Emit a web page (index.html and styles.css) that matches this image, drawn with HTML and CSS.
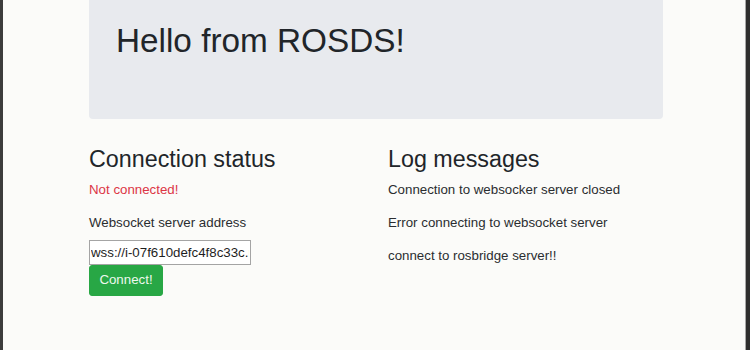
FILE: index.html
```html
<!DOCTYPE html>
<html lang="en">
<head>
<meta charset="utf-8">
<title>ROSDS</title>
<link rel="stylesheet" href="styles.css">
</head>
<body>
<div class="frame">
  <div class="container">
    <div class="jumbotron">
      <h1 class="display">Hello from ROSDS!</h1>
    </div>
    <div class="row">
      <div class="col">
        <h3 class="heading">Connection status</h3>
        <p class="status">Not connected!</p>
        <label class="label" for="ws">Websocket server address</label>
        <input class="address" id="ws" type="text" value="wss://i-07f610defc4f8c33c.robotigniteacademy.com/rosbridge/">
        <button class="btn" type="button">Connect!</button>
      </div>
      <div class="col">
        <h3 class="heading">Log messages</h3>
        <p class="log">Connection to websocker server closed</p>
        <p class="log">Error connecting to websocket server</p>
        <p class="log">connect to rosbridge server!!</p>
      </div>
    </div>
  </div>
</div>
</body>
</html>
```

FILE: styles.css
```css
* { box-sizing: border-box; }

html, body {
  margin: 0;
  padding: 0;
  height: 350px;
  overflow: hidden;
}

body {
  font-family: "Liberation Sans", Arial, sans-serif;
  font-size: 13.3px;
  line-height: 19.8px;
  color: #212529;
  background: #fbfbf9;
}

.frame {
  height: 350px;
  border-left: 3px solid #3c3c3c;
  border-right: 4px solid #2e2e2e;
  box-shadow: inset -1px 0 0 #a8a8a8;
  background: #fbfbf9;
}

.container {
  width: 574px;
  margin-left: 86px;
}

.jumbotron {
  background: #e8eaee;
  border-radius: 0 0 4px 4px;
  padding: 21px 27px 58px;
  margin-bottom: 27px;
}

.display {
  margin: 0;
  font-size: 33.3px;
  line-height: 40px;
  font-weight: 400;
  color: #212529;
}

.row {
  display: grid;
  grid-template-columns: 275px 275px;
  column-gap: 24px;
}

.col {
  display: flex;
  flex-direction: column;
  align-items: flex-start;
}

.heading {
  margin: 0 0 6.6px;
  font-size: 23.3px;
  line-height: 27.7px;
  font-weight: 400;
  color: #212529;
}

.status {
  margin: 0 0 13.2px;
  color: #dc3545;
}

.log {
  margin: 0 0 13.2px;
  color: #2a2d30;
}

.label {
  margin-bottom: 6.6px;
  color: #2a2d30;
}

.address {
  width: 162px;
  height: 25px;
  margin: 0;
  padding: 0 1px;
  border: 1px solid #a4a4a4;
  border-radius: 0;
  background: #fff;
  font-family: "Liberation Sans", Arial, sans-serif;
  font-size: 13.3px;
  color: #1e1e1e;
  outline: none;
}

.btn {
  width: 74px;
  height: 31px;
  margin: 0;
  padding: 0;
  border: 1px solid #28a745;
  border-radius: 3px;
  background: #28a745;
  color: #eef8ee;
  font-family: "Liberation Sans", Arial, sans-serif;
  font-size: 13.3px;
  line-height: 19.8px;
  cursor: pointer;
}
```
